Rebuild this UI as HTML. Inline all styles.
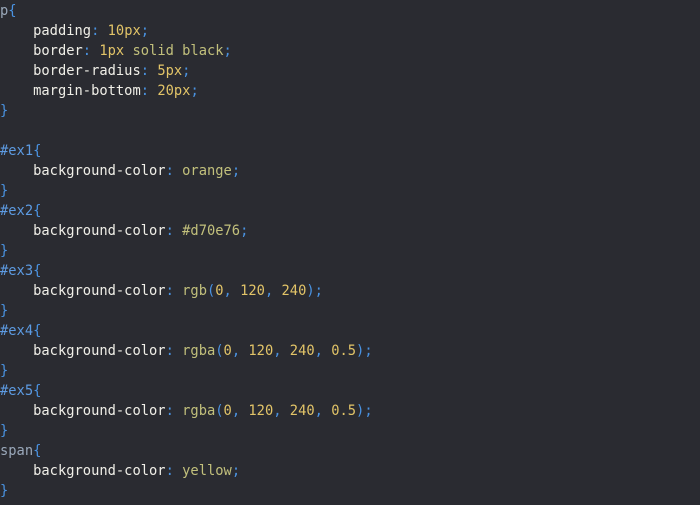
<!DOCTYPE html>
<html><head><meta charset="utf-8"><style>
html,body{margin:0;padding:0;background:#2a2b31;width:700px;height:505px;overflow:hidden}
pre{margin:0;padding:1px 0 0 0;font-family:"DejaVu Sans Mono","Liberation Mono",monospace;font-size:13.75px;line-height:20px;color:#ecebe6;white-space:pre}
.s{color:#9aa8ba}.i{color:#5d9be2}.b{color:#4a93e2}.p{color:#f0efe8}.v{color:#c2c07c}.n{color:#e2c468}
</style></head><body><pre><span class="s">p</span><span class="b">{</span>
    <span class="p">padding</span><span class="b">:</span> <span class="n">10px</span><span class="b">;</span>
    <span class="p">border</span><span class="b">:</span> <span class="n">1px</span> <span class="v">solid black</span><span class="b">;</span>
    <span class="p">border-radius</span><span class="b">:</span> <span class="n">5px</span><span class="b">;</span>
    <span class="p">margin-bottom</span><span class="b">:</span> <span class="n">20px</span><span class="b">;</span>
<span class="b">}</span>

<span class="i">#ex1</span><span class="b">{</span>
    <span class="p">background-color</span><span class="b">:</span> <span class="v">orange</span><span class="b">;</span>
<span class="b">}</span>
<span class="i">#ex2</span><span class="b">{</span>
    <span class="p">background-color</span><span class="b">:</span> <span class="v">#d70e76</span><span class="b">;</span>
<span class="b">}</span>
<span class="i">#ex3</span><span class="b">{</span>
    <span class="p">background-color</span><span class="b">:</span> <span class="v">rgb</span><span class="b">(</span><span class="n">0</span><span class="b">,</span> <span class="n">120</span><span class="b">,</span> <span class="n">240</span><span class="b">);</span>
<span class="b">}</span>
<span class="i">#ex4</span><span class="b">{</span>
    <span class="p">background-color</span><span class="b">:</span> <span class="v">rgba</span><span class="b">(</span><span class="n">0</span><span class="b">,</span> <span class="n">120</span><span class="b">,</span> <span class="n">240</span><span class="b">,</span> <span class="n">0.5</span><span class="b">);</span>
<span class="b">}</span>
<span class="i">#ex5</span><span class="b">{</span>
    <span class="p">background-color</span><span class="b">:</span> <span class="v">rgba</span><span class="b">(</span><span class="n">0</span><span class="b">,</span> <span class="n">120</span><span class="b">,</span> <span class="n">240</span><span class="b">,</span> <span class="n">0.5</span><span class="b">);</span>
<span class="b">}</span>
<span class="s">span</span><span class="b">{</span>
    <span class="p">background-color</span><span class="b">:</span> <span class="v">yellow</span><span class="b">;</span>
<span class="b">}</span></pre></body></html>
